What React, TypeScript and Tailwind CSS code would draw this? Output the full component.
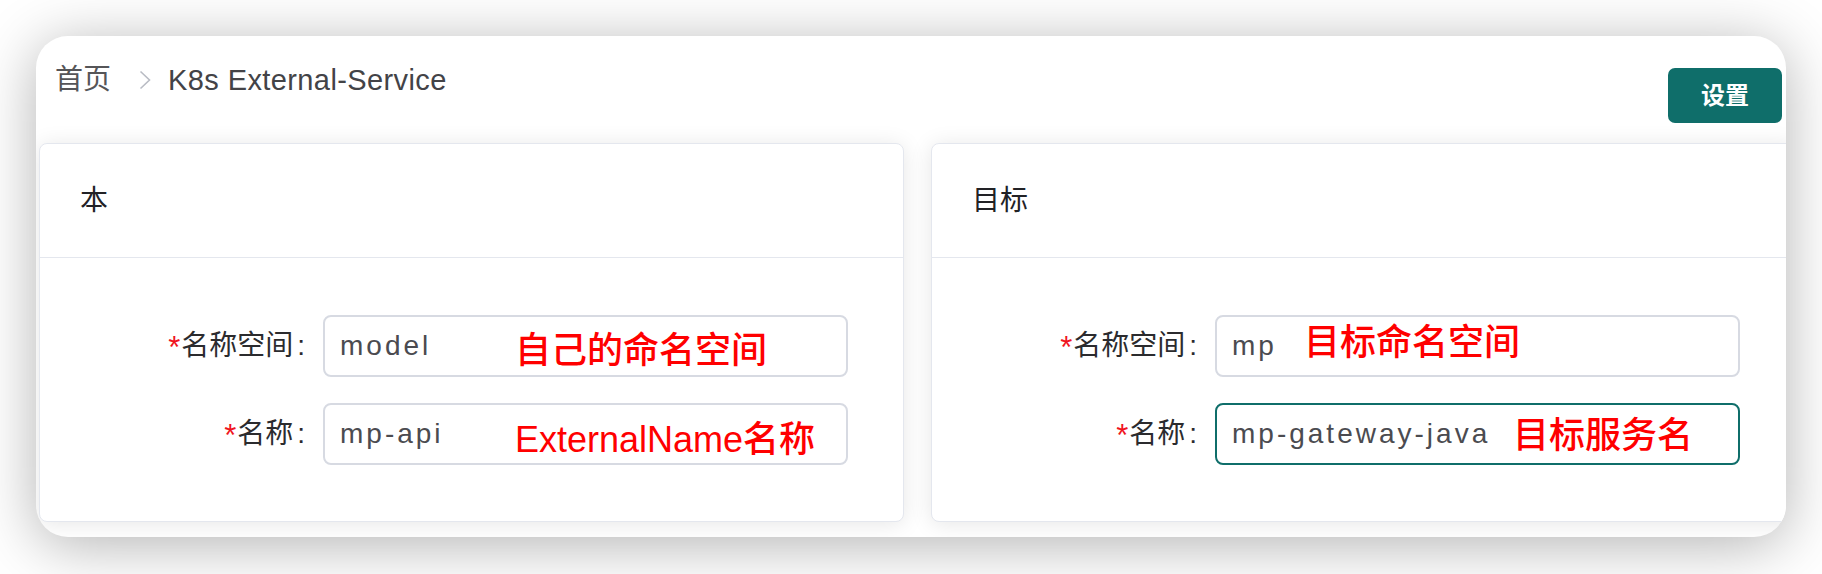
import React from "react";

const FONT = '"Liberation Sans", "Noto Sans CJK SC", sans-serif';

type RowProps = {
  label: string;
  value: string;
  note: string;
  noteLeft: string;
  noteShift: string;
  focused?: boolean;
};

function Row({ label, value, note, noteLeft, noteShift, focused }: RowProps) {
  return (
    <div className="flex items-center">
      <div className="w-[283px] pr-[18px] flex justify-end items-center text-[28px] leading-none text-[#2b2b2e]">
        <span className="text-[31px] text-[#f0141e] mr-[1px] translate-y-[1px]">*</span>
        <span>{label}</span>
        <span className="ml-[4px]">:</span>
      </div>
      <div
        className={
          focused
            ? "relative w-[525px] h-[62px] rounded-[8px] border-2 border-[#0f6e6a] bg-white flex items-center pl-[15px]"
            : "relative w-[525px] h-[62px] rounded-[8px] border-2 border-[#d7dae2] bg-white flex items-center pl-[15px]"
        }
      >
        <span className="text-[28px] leading-none tracking-[3px] text-[#4b4b50]">{value}</span>
        <div className={`absolute inset-y-0 flex items-center ${noteLeft}`}>
          <span className={`text-[36px] leading-none font-medium text-[#ff0000] ${noteShift}`}>{note}</span>
        </div>
      </div>
    </div>
  );
}

type CardProps = { title: string; children: React.ReactNode };

function Card({ title, children }: CardProps) {
  return (
    <div className="w-[865px] h-[379px] shrink-0 bg-white border border-[#e4e7ee] rounded-[8px] shadow-[0_2px_22px_rgba(0,0,0,0.1)] flex flex-col">
      <div className="h-[114px] border-b border-[#e4e7ee] flex items-center pl-[40px] text-[28px] leading-none text-[#222226]">
        {title}
      </div>
      <div className="flex flex-col gap-[26px] pt-[57px]">{children}</div>
    </div>
  );
}

export default function App() {
  return (
    <div className="w-[1822px] h-[574px] bg-white p-[36px]" style={{ fontFamily: FONT }}>
      <div className="w-[1750px] h-[501px] bg-white rounded-[32px] overflow-hidden shadow-[0_8px_60px_rgba(0,0,0,0.3)] flex flex-col">
        <div className="h-[107px] shrink-0 flex justify-between items-start pl-[19px] pr-[4px] pt-[30px]">
          <div className="flex items-center h-[28px] text-[28px] leading-none">
            <span className="text-[#555558]">首页</span>
            <svg width="12" height="20" viewBox="0 0 12 20" className="ml-[28px] mr-[17px]">
              <path d="M1.5 1.5 L10.5 10 L1.5 18.5" fill="none" stroke="#b9bcc4" strokeWidth="1.6" />
            </svg>
            <span className="text-[29px] tracking-[0.4px] text-[#434347]">K8s External-Service</span>
          </div>
          <button className="mt-[2px] w-[114px] h-[55px] rounded-[7px] bg-[#0f6e6a] text-white text-[24px] font-bold leading-none">
            设置
          </button>
        </div>
        <div className="flex gap-[27px] pl-[3px]">
          <Card title="本">
            <Row label="名称空间" value="model" note="自己的命名空间" noteLeft="left-[190px]" noteShift="translate-y-[5px]" />
            <Row label="名称" value="mp-api" note="ExternalName名称" noteLeft="left-[190px]" noteShift="translate-y-[6px]" />
          </Card>
          <Card title="目标">
            <Row label="名称空间" value="mp" note="目标命名空间" noteLeft="left-[87px]" noteShift="-translate-y-[3px]" />
            <Row label="名称" value="mp-gateway-java" note="目标服务名" noteLeft="left-[296px]" noteShift="translate-y-[2px]" focused />
          </Card>
        </div>
      </div>
    </div>
  );
}
